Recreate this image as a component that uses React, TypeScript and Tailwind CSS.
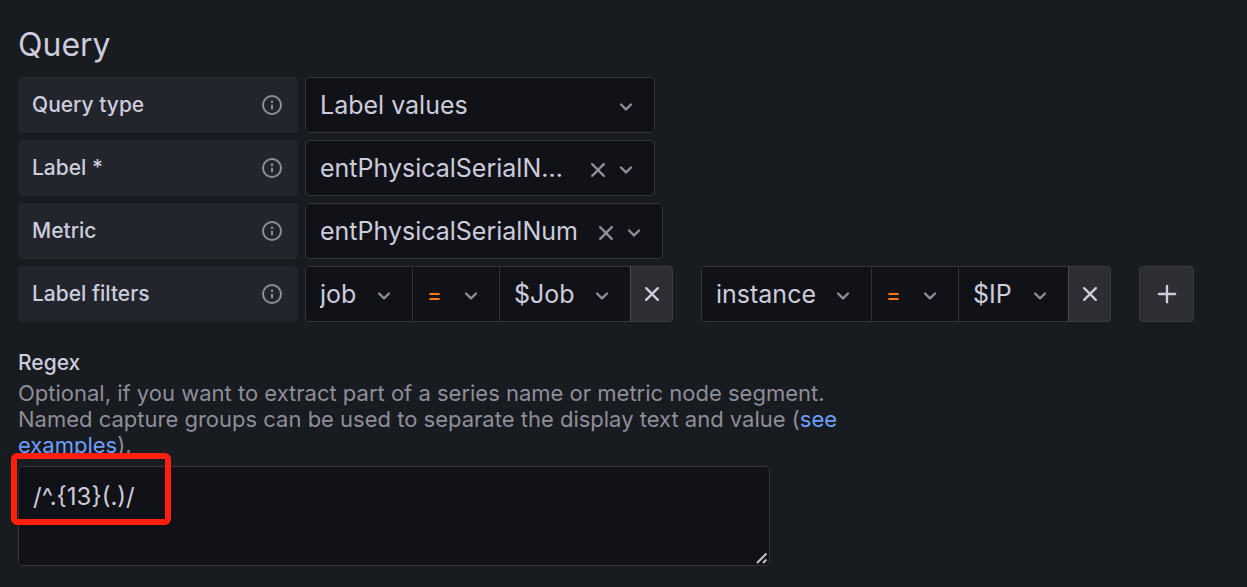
import React from "react";
import clsx from "clsx";

type IconProps = { path: string; className?: string };

const ANGLE_DOWN =
  "M17,9.17a1,1,0,0,0-1.41,0L12,12.71,8.46,9.17a1,1,0,0,0-1.41,0,1,1,0,0,0,0,1.42l4.24,4.24a1,1,0,0,0,1.42,0L17,10.59A1,1,0,0,0,17,9.17Z";
const TIMES =
  "M13.41,12l4.3-4.29a1,1,0,1,0-1.42-1.42L12,10.59,7.71,6.29A1,1,0,0,0,6.29,7.71L10.59,12l-4.3,4.29a1,1,0,0,0,0,1.42,1,1,0,0,0,1.42,0L12,13.41l4.29,4.3a1,1,0,0,0,1.42,0,1,1,0,0,0,0-1.42Z";
const PLUS =
  "M19,11H13V5a1,1,0,0,0-2,0v6H5a1,1,0,0,0,0,2h6v6a1,1,0,0,0,2,0V13h6a1,1,0,0,0,0-2Z";
const INFO =
  "M12,2A10,10,0,1,0,22,12,10,10,0,0,0,12,2Zm0,18a8,8,0,1,1,8-8A8,8,0,0,1,12,20Zm0-8.5a1,1,0,0,0-1,1v3a1,1,0,0,0,2,0v-3A1,1,0,0,0,12,11.5Zm0-4a1.25,1.25,0,1,0,1.25,1.25A1.25,1.25,0,0,0,12,7.5Z";

const Icon = ({ path, className }: IconProps) => (
  <svg viewBox="0 0 24 24" fill="currentColor" aria-hidden="true" className={clsx("shrink-0", className)}>
    <path d={path} />
  </svg>
);

type SelectProps = {
  id?: string;
  label?: string;
  value: string;
  className?: string;
  selectClass?: string;
  clearable?: boolean;
};

// The select and its icons share one grid cell, so the whole box stays clickable.
const Select = ({ id, label, value, className, selectClass, clearable }: SelectProps) => (
  <div className={clsx("grid h-14 border border-[#343539] bg-[#111217]", className)}>
    <select
      id={id}
      aria-label={label}
      defaultValue={value}
      className={clsx(
        "col-start-1 row-start-1 w-full min-w-0 appearance-none truncate bg-transparent pt-0.5 pl-3.5 outline-none",
        clearable ? "pr-20" : "pr-12",
        selectClass ?? "text-[25px]"
      )}
    >
      <option value={value}>{value}</option>
    </select>
    <div className="pointer-events-none col-start-1 row-start-1 flex items-center justify-self-end pt-1 pr-3.5 text-[#8e8e9a]">
      {clearable && (
        <button type="button" aria-label="Clear value" className="pointer-events-auto">
          <Icon path={TIMES} className="size-7" />
        </button>
      )}
      <Icon path={ANGLE_DOWN} className="size-7" />
    </div>
  </div>
);

const FieldLabel = ({ htmlFor, children }: { htmlFor: string; children: React.ReactNode }) => (
  <label
    htmlFor={htmlFor}
    className="flex h-14 w-[280px] shrink-0 items-center justify-between rounded-sm bg-[#22252b] px-3.5 text-[21px] font-medium"
  >
    {children}
    <Icon path={INFO} className="size-6 text-[#8e8e9a]" />
  </label>
);

type FilterProps = { id?: string; name: string; value: string; nameClass: string; valueClass: string };

const LabelFilter = ({ id, name, value, nameClass, valueClass }: FilterProps) => (
  <div className="flex">
    <Select id={id} label="Label name" value={name} className={clsx("rounded-l-sm", nameClass)} />
    <Select
      label="Operator"
      value="="
      className="w-[87px] border-l-0"
      selectClass="text-[22px] font-medium text-[#ff780a]"
    />
    <Select label="Label value" value={value} className={clsx("border-x-0", valueClass)} />
    <button
      type="button"
      aria-label="Remove filter"
      className="flex h-14 w-[43px] items-center justify-center rounded-r-sm border border-[#3a3b40] border-l-[#4a4b50] bg-[#2d2e33]"
    >
      <Icon path={TIMES} className="size-7" />
    </button>
  </div>
);

export default function App() {
  return (
    <main className="min-h-screen bg-[#181b1f] px-[18px] pt-[25px] pb-5 font-['Inter',sans-serif] text-[#ccccdc]">
      <h1 className="mb-3 text-[32px] leading-10">Query</h1>

      <div className="flex flex-col gap-[7px]">
        <div className="flex gap-[7px]">
          <FieldLabel htmlFor="query-type">Query type</FieldLabel>
          <Select id="query-type" value="Label values" className="w-[350px] rounded-sm" />
        </div>
        <div className="flex gap-[7px]">
          <FieldLabel htmlFor="label">Label *</FieldLabel>
          <Select id="label" value="entPhysicalSerialNum" className="w-[350px] rounded-sm" clearable />
        </div>
        <div className="flex gap-[7px]">
          <FieldLabel htmlFor="metric">Metric</FieldLabel>
          <Select id="metric" value="entPhysicalSerialNum" className="w-[358px] rounded-sm" clearable />
        </div>
        <div className="flex gap-[7px]">
          <FieldLabel htmlFor="filters">Label filters</FieldLabel>
          <div className="flex flex-wrap gap-7">
            <LabelFilter id="filters" name="job" value="$Job" nameClass="w-[108px]" valueClass="w-[130px]" />
            <LabelFilter name="instance" value="$IP" nameClass="w-[171px]" valueClass="w-[109px]" />
            <button
              type="button"
              aria-label="Add filter"
              className="flex h-14 w-[55px] items-center justify-center rounded-sm border border-[#3a3b40] bg-[#2d2e33]"
            >
              <Icon path={PLUS} className="size-7" />
            </button>
          </div>
        </div>
      </div>

      <div className="mt-7 max-w-[820px]">
        <label htmlFor="regex" className="mb-1 block text-[21px] leading-[26px] font-medium">
          Regex
        </label>
        <p id="regex-help" className="text-[22px] leading-[26px] text-[#8e8e9a]">
          Optional, if you want to extract part of a series name or metric node segment. Named capture
          groups can be used to separate the display text and value (
          <a href="#examples" className="text-[#6e9fff]">
            see examples
          </a>
          ).
        </p>
      </div>

      <div className="relative mt-2 max-w-[752px]">
        <textarea
          id="regex"
          aria-describedby="regex-help"
          defaultValue="/^.{13}(.)/"
          spellCheck={false}
          className="block h-[100px] w-full resize-none rounded-sm border border-[#343539] bg-[#111217] px-3.5 py-3 text-[24px] leading-9 outline-none"
        />
        <svg
          viewBox="0 0 12 12"
          aria-hidden="true"
          className="pointer-events-none absolute right-0.5 bottom-0.5 size-3 stroke-[#c4c4c8]"
          strokeWidth="2"
        >
          <path d="M1 11 10.5 1.5M7 11l3.5-3.5" />
        </svg>
        <div className="pointer-events-none absolute -top-[13px] -left-[7px] h-[72px] w-40 rounded-md border-6 border-[#ff1f0f]" />
      </div>
    </main>
  );
}
